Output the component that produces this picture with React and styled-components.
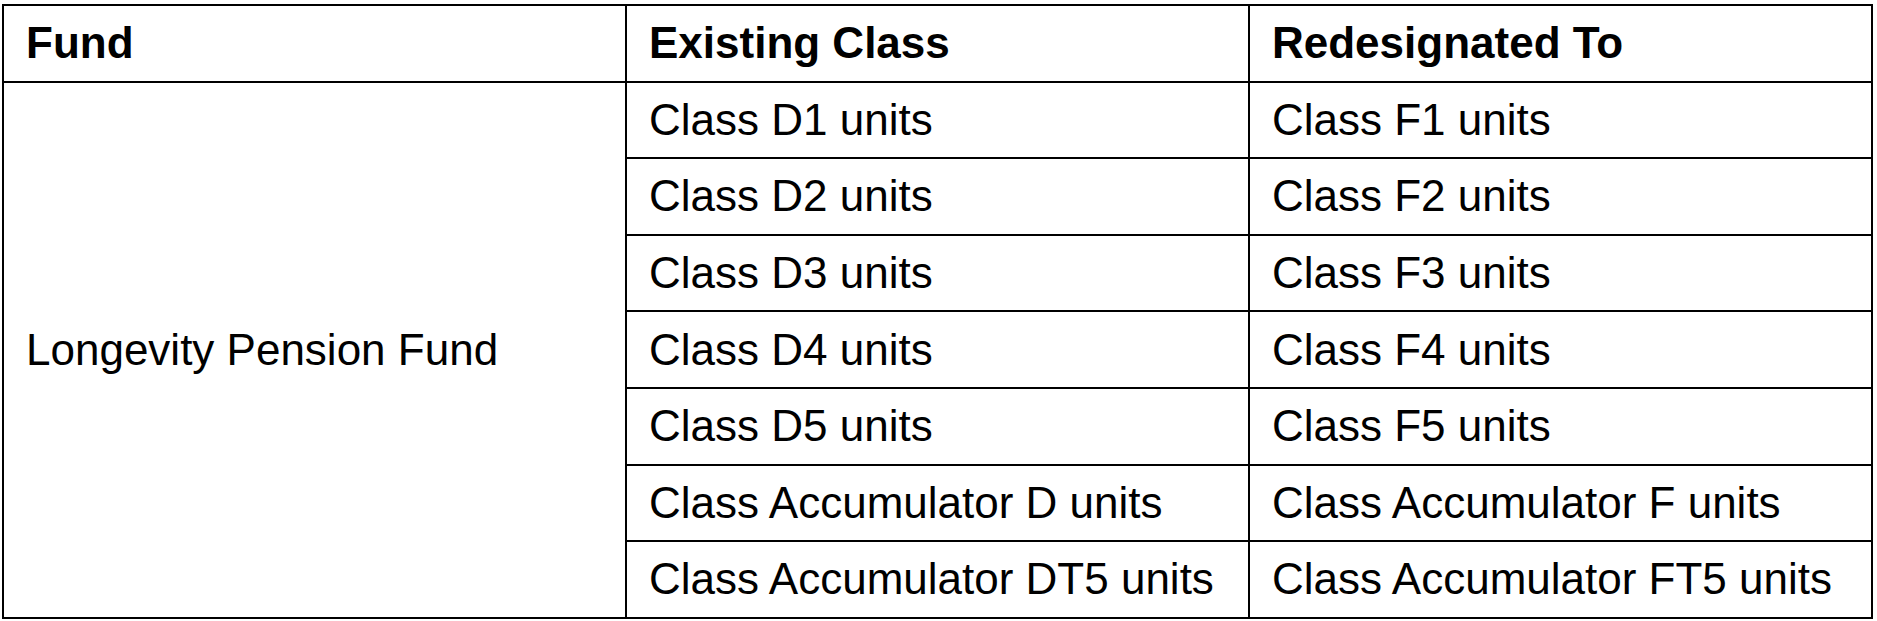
import React from "react";
import styled, { createGlobalStyle } from "styled-components";

const Global = createGlobalStyle`
  html, body { margin: 0; padding: 0; background: #fff; }
  body { font-family: "Liberation Sans", Arial, sans-serif; color: #000; }
`;

const Page = styled.div`
  padding: 4px 0 0 2px;
`;

const Table = styled.table`
  width: 1871px;
  table-layout: fixed;
  border-collapse: collapse;
  border: 2px solid #000;
`;

const Row = styled.tr`
  height: 76.6px;
`;

const HeadCell = styled.th`
  border: 2px solid #000;
  padding: 0 0 0 22px;
  text-align: left;
  vertical-align: middle;
  font-size: 44px;
  font-weight: 700;
  line-height: 1;
`;

const Cell = styled.td`
  border: 2px solid #000;
  padding: 0 0 0 22px;
  text-align: left;
  vertical-align: middle;
  font-size: 44px;
  font-weight: 400;
  line-height: 1;
  white-space: nowrap;
`;

const rows = [
  ["Class D1 units", "Class F1 units"],
  ["Class D2 units", "Class F2 units"],
  ["Class D3 units", "Class F3 units"],
  ["Class D4 units", "Class F4 units"],
  ["Class D5 units", "Class F5 units"],
  ["Class Accumulator D units", "Class Accumulator F units"],
  ["Class Accumulator DT5 units", "Class Accumulator FT5 units"],
];

export default function App() {
  return (
    <Page>
      <Global />
      <Table>
        <thead>
          <Row>
            <HeadCell>Fund</HeadCell>
            <HeadCell>Existing Class</HeadCell>
            <HeadCell>Redesignated To</HeadCell>
          </Row>
        </thead>
        <tbody>
          {rows.map(([from, to], i) => (
            <Row key={from}>
              {i === 0 && <Cell rowSpan={rows.length}>Longevity Pension Fund</Cell>}
              <Cell>{from}</Cell>
              <Cell>{to}</Cell>
            </Row>
          ))}
        </tbody>
      </Table>
    </Page>
  );
}
